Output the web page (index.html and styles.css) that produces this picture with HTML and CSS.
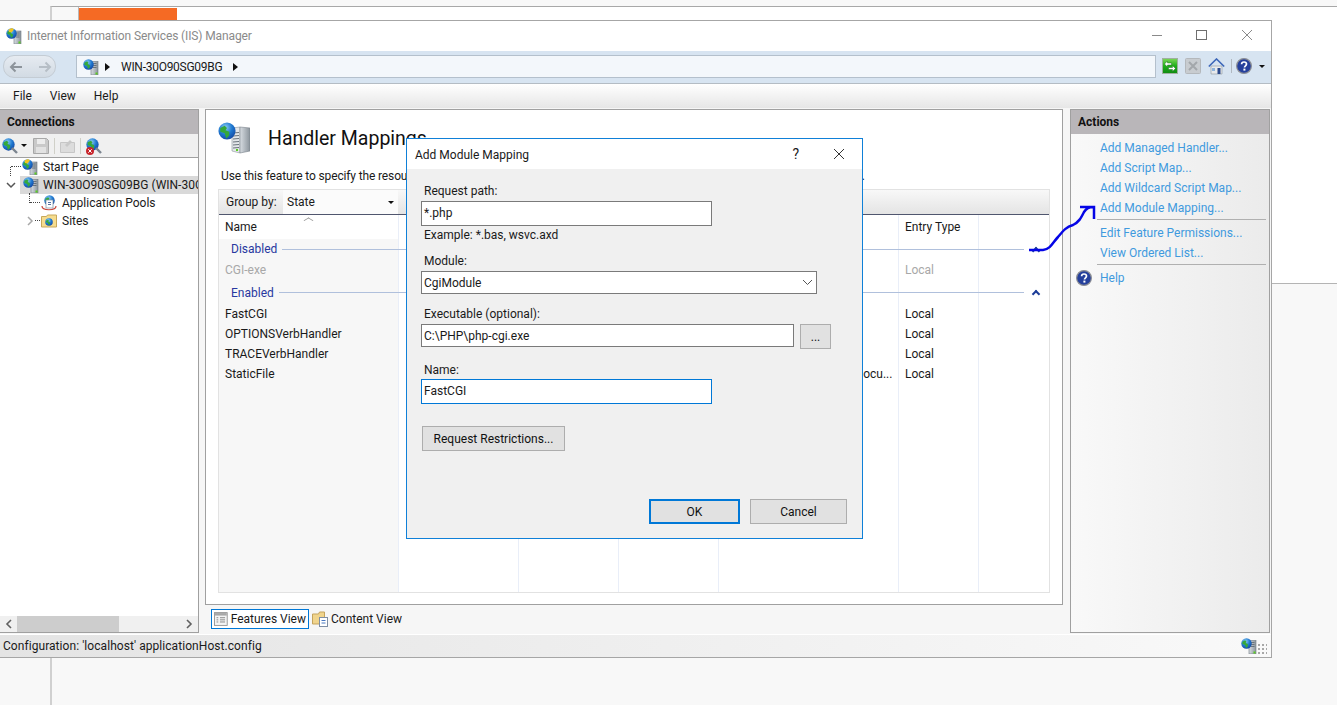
FILE: index.html
```html
<!DOCTYPE html>
<html lang="en">
<head>
    <meta charset="UTF-8">
    <meta name="viewport" content="width=device-width, initial-scale=1.0">
    <title>Internet Information Services (IIS) Manager</title>
    <link rel="stylesheet" href="styles.css">
</head>
<body>
    <svg class="defs" aria-hidden="true">
        <defs>
            <radialGradient id="sea" cx=".4" cy=".3" r=".8">
                <stop offset="0" stop-color="#8fd0f5"/>
                <stop offset=".5" stop-color="#1f78d0"/>
                <stop offset="1" stop-color="#123f9a"/>
            </radialGradient>
            <linearGradient id="case" x1="0" x2="1" y1="0" y2="0">
                <stop offset="0" stop-color="#d8dde2"/>
                <stop offset="1" stop-color="#8b949c"/>
            </linearGradient>
            <linearGradient id="greenbtn" x1="0" x2="0" y1="0" y2="1">
                <stop offset="0" stop-color="#7fd85a"/>
                <stop offset=".5" stop-color="#1fae1a"/>
                <stop offset="1" stop-color="#0f8a12"/>
            </linearGradient>
        </defs>
        <symbol id="globe" viewBox="0 0 12 12">
            <circle cx="6" cy="6" r="5.7" fill="url(#sea)"/>
            <path d="M1.500 4 4.500 2.500 6 4 5 5.500 7.500 6.500 7.500 9 5.500 11 4.500 7.500 1.500 6.500z" fill="#35a83a"/>
        </symbol>
        <symbol id="server" viewBox="0 0 16 16">
            <rect x="8" y="2.500" width="7" height="13.500" fill="url(#case)" stroke="#6f7880" stroke-width=".6"/>
            <path d="M9.500 4.500h4M9.500 6.500h4M9.500 8.500h4" stroke="#59626a" stroke-width=".8"/>
            <rect x="12.500" y="13.500" width="2" height="2" fill="#5ad01e"/>
            <use href="#globe" x="0" y="0" width="11" height="11"/>
        </symbol>
        <symbol id="server-big" viewBox="0 0 32 32">
            <path d="M14 6 22 5V31L14 29z" fill="#e4e7ea" stroke="#8b949c" stroke-width=".6"/>
            <path d="M22 5 32 6V29L22 31z" fill="url(#case)" stroke="#7a838b" stroke-width=".6"/>
            <path d="M15 11 21 10.500M15 14 21 13.500M15 17 21 16.500M15 20 21 19.500M15 23 21 22.500M15 26 21 25.500" stroke="#69727a"/>
            <rect x="18" y="27" width="2" height="2" fill="#5ad01e"/>
            <use href="#globe" x="0" y="0" width="18" height="18"/>
        </symbol>
        <symbol id="server-y" viewBox="0 0 16 16">
            <rect x="8" y="3" width="7" height="13" fill="url(#case)" stroke="#6f7880" stroke-width=".6"/>
            <path d="M9.500 5h4M9.500 7h4M9.500 9h4" stroke="#59626a" stroke-width=".8"/>
            <rect x="12.500" y="13.500" width="2" height="2" fill="#5ad01e"/>
            <use href="#globe" x="0" y="0" width="11" height="11"/>
            <path d="M2.500 1.500 6 0 8 1.500 5.500 4.500 3 4z" fill="#f2c420"/>
        </symbol>
        <symbol id="help" viewBox="0 0 16 16">
            <circle cx="8" cy="8" r="7.400" fill="#25409c" stroke="#8d8f95" stroke-width="1.200"/>
            <path d="M5.600 6.200C5.600 4.600 6.800 4 8 4s2.500.7 2.500 2.100c0 1.800-2 1.800-2 3.500" fill="none" stroke="#fff" stroke-width="1.700"/>
            <rect x="7.400" y="10.600" width="2" height="2" fill="#fff"/>
        </symbol>
        <symbol id="globe-lens" viewBox="0 0 16 16">
            <use href="#globe" x="0" y="0" width="13" height="13"/>
            <path d="M10 10l5 5" stroke="#7c8590" stroke-width="2.400"/>
        </symbol>
    </svg>

    <div class="back-bar"><div class="orange"></div></div>

    <div class="window">
        <div class="titlebar">
            <svg class="icon"><use href="#server-y"/></svg>
            <span class="title-text">Internet Information Services (IIS) Manager</span>
            <div class="win-btns">
                <svg width="12" height="12" viewBox="0 0 12 12"><path d="M1 6.500h10" stroke="#8a8a8a"/></svg>
                <svg width="12" height="12" viewBox="0 0 12 12"><rect x=".5" y="1.500" width="10" height="9" fill="none" stroke="#6f6f6f"/></svg>
                <svg width="12" height="12" viewBox="0 0 12 12"><path d="M1 1l10 10M11 1 1 11" stroke="#8a8a8a"/></svg>
            </div>
        </div>

        <div class="addressbar">
            <div class="nav-pill">
                <svg width="14" height="12" viewBox="0 0 14 12"><path d="M13 6H2M6.500 1.500 2 6l4.500 4.500" fill="none" stroke="#8d949b" stroke-width="2"/></svg>
                <svg width="14" height="12" viewBox="0 0 14 12"><path d="M1 6h11M7.500 1.500 12 6l-4.500 4.500" fill="none" stroke="#b6bec6" stroke-width="2"/></svg>
            </div>
            <div class="address">
                <svg class="icon"><use href="#server"/></svg>
                <span class="tri"></span>
                <span class="addr-text">WIN-30O90SG09BG</span>
                <span class="tri"></span>
            </div>
            <div class="addr-tools">
                <svg width="16" height="16" viewBox="0 0 16 16"><rect x=".5" y=".5" width="15" height="15" fill="url(#greenbtn)" stroke="#9fb0a0"/><path d="M2.500 6 5.500 3V5H9.500V7H5.500V9zM13.500 10.500l-3 3v-2H6.500v-2h4v-2z" fill="#fff" stroke="#0c5a10" stroke-width=".4"/></svg>
                <svg width="16" height="16" viewBox="0 0 16 16"><rect x=".5" y=".5" width="15" height="15" rx="1" fill="#c8ccd0" stroke="#b4b8bc"/><path d="M4 4l8 8M12 4l-8 8" stroke="#a3a7ab" stroke-width="2"/></svg>
                <svg width="17" height="17" viewBox="0 0 17 17"><path d="M3 8v8h11V8z" fill="#e8eaec" stroke="#8a939c" stroke-width=".6"/><path d="M.8 8.500 8.500 1l7.700 7.500" fill="none" stroke="#3c66b8" stroke-width="1.600"/><rect x="4" y="10" width="3" height="3" fill="#8fb4dc"/><rect x="9.500" y="10" width="3" height="6" fill="#2c4a8c"/></svg>
                <span class="tool-sep"></span>
                <svg width="16" height="16"><use href="#help"/></svg>
                <span class="caret"></span>
            </div>
        </div>

        <div class="menubar">
            <span>File</span>
            <span>View</span>
            <span>Help</span>
        </div>

        <div class="workspace">
            <section class="connections">
                <h2 class="panel-head">Connections</h2>
                <div class="conn-tools">
                    <svg width="16" height="16"><use href="#globe-lens"/></svg>
                    <span class="caret small"></span>
                    <svg width="16" height="16" viewBox="0 0 16 16"><path d="M.5.5h13l2 2v13H.5z" fill="#c9c9c9" stroke="#a8a8a8"/><rect x="4" y="1" width="8" height="5" fill="#ececec"/><rect x="3" y="9" width="10" height="6" fill="#e2e2e2"/></svg>
                    <span class="conn-sep"></span>
                    <svg width="15" height="14" viewBox="0 0 15 14"><path d="M.5 3.500h14v10H.5z" fill="#dcdcdc" stroke="#c6c6c6"/><path d="M5 6 10 1l2 2-5 5z" fill="#c8c8c8"/></svg>
                    <span class="conn-sep"></span>
                    <span class="globe-x">
                        <svg width="16" height="16"><use href="#globe-lens"/></svg>
                        <svg class="x-badge" width="8" height="8" viewBox="0 0 8 8"><circle cx="4" cy="4" r="4" fill="#c8262c"/><path d="M2.300 2.300l3.400 3.400M5.700 2.300 2.300 5.700" stroke="#fff"/></svg>
                    </span>
                </div>
                <div class="tree">
                    <div class="node"><span class="dots"></span><svg class="icon"><use href="#server-y"/></svg><span>Start Page</span></div>
                    <div class="node selected">
                        <svg class="chev" width="10" height="8" viewBox="0 0 10 8"><path d="M1 2l4 4 4-4" fill="none" stroke="#555" stroke-width="1.500"/></svg>
                        <svg class="icon"><use href="#server"/></svg><span>WIN-30O90SG09BG (WIN-30O90SG09BG\Administrator)</span>
                    </div>
                    <div class="node child"><span class="dots"></span>
                        <svg class="icon" viewBox="0 0 16 16"><use href="#globe" x="3" y="0" width="11" height="11"/><rect x="5" y="5" width="7" height="8" fill="#fff" stroke="#7d8ea0" stroke-width=".7"/><path d="M7 7.500h3M7 9.500h3" stroke="#5570a0"/><path d="M1 11c0 5 14 5 14 0" fill="none" stroke="#c8453a" stroke-width="1.200"/></svg>
                        <span>Application Pools</span>
                    </div>
                    <div class="node child">
                        <svg class="chev light" width="8" height="10" viewBox="0 0 8 10"><path d="M2 1l4 4-4 4" fill="none" stroke="#a8a8a8" stroke-width="1.500"/></svg>
                        <span class="dots short"></span>
                        <svg class="icon" viewBox="0 0 16 16"><path d="M.5 3.500h5l1-1.500h9v12H.5z" fill="#f5dc8e" stroke="#c8a85a"/><use href="#globe" x="4" y="5" width="8" height="8"/></svg>
                        <span>Sites</span>
                    </div>
                </div>
                <div class="hscroll">
                    <svg width="8" height="10" viewBox="0 0 8 10"><path d="M6 1 2 5l4 4" fill="none" stroke="#606060" stroke-width="1.600"/></svg>
                    <div class="thumb-track"><div class="thumb"></div></div>
                    <svg width="8" height="10" viewBox="0 0 8 10"><path d="M2 1l4 4-4 4" fill="none" stroke="#606060" stroke-width="1.600"/></svg>
                </div>
            </section>

            <div class="center">
                <section class="feature">
                    <div class="feature-head">
                        <svg class="icon-big"><use href="#server-big"/></svg>
                        <h1>Handler Mappings</h1>
                    </div>
                    <p class="feature-desc">Use this feature to specify the resources, such as DLLs and managed code, that handle responses for specific request types.</p>
                    <div class="list">
                        <div class="groupbar">
                            <span class="group-label">Group by:</span>
                            <div class="group-select"><span>State</span><span class="caret small"></span></div>
                        </div>
                        <div class="list-body">
                            <div class="row head">
                                <span class="c-name">Name</span>
                                <span class="sort"></span>
                                <span class="c-handler"></span>
                                <span class="c-type">Entry Type</span>
                            </div>
                            <div class="group first"><span>Disabled</span><i></i><b class="up"></b></div>
                            <div class="row off">
                                <span class="c-name">CGI-exe</span>
                                <span class="c-handler"></span>
                                <span class="c-type">Local</span>
                            </div>
                            <div class="group"><span>Enabled</span><i></i><b class="up"></b></div>
                            <div class="row">
                                <span class="c-name">FastCGI</span>
                                <span class="c-handler"></span>
                                <span class="c-type">Local</span>
                            </div>
                            <div class="row">
                                <span class="c-name">OPTIONSVerbHandler</span>
                                <span class="c-handler"></span>
                                <span class="c-type">Local</span>
                            </div>
                            <div class="row">
                                <span class="c-name">TRACEVerbHandler</span>
                                <span class="c-handler"></span>
                                <span class="c-type">Local</span>
                            </div>
                            <div class="row">
                                <span class="c-name">StaticFile</span>
                                <span class="c-handler">StaticFileModule,DefaultDocu...</span>
                                <span class="c-type">Local</span>
                            </div>
                        </div>
                    </div>
                </section>
                <div class="view-tabs">
                    <div class="view-tab active">
                        <svg width="16" height="16" viewBox="0 0 16 16"><rect x=".5" y=".5" width="15" height="15" fill="#f4f4f4" stroke="#8d8d8d"/><rect x="1" y="1" width="14" height="3" fill="#a8a8a8"/><path d="M3 6.500h2M3 9h2M3 11.500h2M7 6.500h6M7 9h6M7 11.500h6" stroke="#7a7a7a"/></svg>
                        <span>Features View</span>
                    </div>
                    <div class="view-tab">
                        <svg width="16" height="16" viewBox="0 0 16 16"><path d="M.5 3h6l1-2h5v12H.5z" fill="#f0d48c" stroke="#c4a35c"/><rect x="7.500" y="6.500" width="8" height="9" fill="#fff" stroke="#7e8ea4"/><path d="M9.500 9.500h4M9.500 12h4" stroke="#4a78c0"/></svg>
                        <span>Content View</span>
                    </div>
                </div>
            </div>

            <section class="actions">
                <h2 class="panel-head">Actions</h2>
                <div class="action-list">
                    <a>Add Managed Handler...</a>
                    <a>Add Script Map...</a>
                    <a>Add Wildcard Script Map...</a>
                    <a>Add Module Mapping...</a>
                    <hr>
                    <a>Edit Feature Permissions...</a>
                    <a>View Ordered List...</a>
                    <hr>
                    <a class="help-link"><svg width="16" height="16"><use href="#help"/></svg>Help</a>
                </div>
            </section>
        </div>

        <div class="statusbar">
            <span class="status-text">Configuration: 'localhost' applicationHost.config</span>
            <svg class="icon"><use href="#server"/></svg>
            <span class="grip"></span>
        </div>

        <div class="dialog">
            <div class="dlg-title">
                <span class="dlg-name">Add Module Mapping</span>
                <span class="dlg-q">?</span>
                <svg width="12" height="12" viewBox="0 0 12 12"><path d="M1 1l10 10M11 1 1 11" stroke="#333"/></svg>
            </div>
            <div class="dlg-body">
                <label class="lbl">Request path:</label>
                <div class="field f-short">*.php</div>
                <p class="hint">Example: *.bas, wsvc.axd</p>
                <label class="lbl l-module">Module:</label>
                <div class="field f-select">
                    <span>CgiModule</span>
                    <svg width="11" height="7" viewBox="0 0 11 7"><path d="M1 1l4.500 4.500L10 1" fill="none" stroke="#555"/></svg>
                </div>
                <label class="lbl l-exec">Executable (optional):</label>
                <div class="exec-row">
                    <div class="field f-exec">C:\PHP\php-cgi.exe</div>
                    <button class="btn btn-dots">...</button>
                </div>
                <label class="lbl l-name">Name:</label>
                <div class="field f-short focus">FastCGI</div>
                <button class="btn btn-restrict">Request Restrictions...</button>
                <div class="dlg-foot">
                    <button class="btn btn-ok">OK</button>
                    <button class="btn btn-cancel">Cancel</button>
                </div>
            </div>
        </div>
    </div>

    <!-- hand drawn arrow on top of the screenshot -->
    <svg class="scribble" width="80" height="60" viewBox="0 0 80 60">
        <path d="M0 46H14C22 45 24 38 29 33C34 27 37 23 44 21C50 18 52 14 55 8C57 5 60 3 64 3M51 3H65V15" fill="none" stroke="#0505e6" stroke-width="2.500"/>
    </svg>
</body>
</html>
```

FILE: styles.css
```css
* {
    margin: 0;
    padding: 0;
    box-sizing: border-box;
}
body {
    position: relative;
    height: 705px;
    overflow: hidden;
    background: #f8f8f8;
    font-family: Roboto, "Noto Sans", Arial, sans-serif;
    font-size: 12px;
    color: #1a1a1a;
}
.defs {
    position: absolute;
    width: 0;
    height: 0;
}
.icon {
    width: 16px;
    height: 16px;
    flex: none;
}

/* stuff behind the window */
.back-bar {
    position: absolute;
    left: 50px;
    top: 6px;
    right: 0;
    height: 278px;
    border-top: 1px solid #a8a8a8;
    border-left: 2px solid #d0d0d0;
    border-bottom: 1px solid #b4b4b4;
    background: linear-gradient(90deg, #f8f8f8 26px, #b8b8b8 26px, #b8b8b8 27px, #fff 27px);
}
.back-bar::after {
    content: "";
    position: absolute;
    left: -2px;
    top: 277px;
    height: 423px;
    border-left: 2px solid #d0d0d0;
}
.orange {
    position: absolute;
    left: 27px;
    top: 1px;
    width: 98px;
    height: 13px;
    background: #f56a24;
}

.window {
    position: absolute;
    left: 0;
    top: 20px;
    width: 1272px;
    height: 638px;
    display: flex;
    flex-direction: column;
    background: #f6f6f6;
    border: 1px solid #a6a6a6;
    border-left: 0;
}
.titlebar {
    height: 30px;
    flex: none;
    display: flex;
    align-items: center;
    padding-left: 6px;
    background: #fff;
}
.title-text {
    margin-left: 5px;
    color: #8a8a8a;
    letter-spacing: -.12px;
}
.win-btns {
    margin-left: auto;
    display: flex;
    gap: 33px;
    padding-right: 18px;
    margin-top: -2px;
}
.addressbar {
    height: 33px;
    flex: none;
    display: flex;
    align-items: center;
    background: #d7e4f1;
    border-bottom: 1px solid #b4bcc4;
}
.nav-pill {
    width: 53px;
    height: 23px;
    margin-left: 3px;
    margin-top: -1px;
    display: flex;
    align-items: center;
    justify-content: space-between;
    padding: 0 3px 0 5px;
    background: linear-gradient(#e6ebf1, #d2dbe4);
    border: 1px solid #c4ccd4;
    border-radius: 11px;
}
.address {
    width: 1080px;
    height: 23px;
    margin-left: 20px;
    margin-top: -1px;
    display: flex;
    align-items: center;
    padding-left: 6px;
    background: #f3f7fb;
    border: 1px solid #b4c0cc;
}
.tri {
    width: 0;
    height: 0;
    margin: 0 11px 0 6px;
    border-left: 5px solid #111;
    border-top: 4px solid transparent;
    border-bottom: 4px solid transparent;
}
.addr-text {
    letter-spacing: -.27px;
}
.addr-text + .tri {
    margin-left: 11px;
}
.addr-tools {
    display: flex;
    align-items: center;
    margin-left: 6px;
    margin-top: -2px;
    gap: 7px;
}
.tool-sep {
    width: 1px;
    height: 14px;
    margin-left: -1px;
    background: #b0b8c0;
}
.tool-sep + svg {
    margin-left: -3px;
}
.caret {
    width: 0;
    height: 0;
    border-top: 3px solid #111;
    border-left: 3px solid transparent;
    border-right: 3px solid transparent;
}
.menubar {
    height: 24px;
    flex: none;
    display: flex;
    align-items: center;
    gap: 18px;
    padding-left: 13px;
    background: linear-gradient(#ffffff, #e6e6e6);
}
.workspace {
    flex: 1;
    display: flex;
    min-height: 0;
    padding-top: 1px;
}
.panel-head {
    height: 24px;
    line-height: 24px;
    padding-left: 7px;
    font-size: 12px;
    font-weight: 700;
    background: #b9b6b9;
    color: #111;
}
.connections {
    width: 199px;
    height: 524px;
    flex: none;
    display: flex;
    flex-direction: column;
    background: #fff;
    border: 1px solid #a0a0a0;
    border-left: 0;
}
.conn-tools {
    height: 24px;
    flex: none;
    display: flex;
    align-items: center;
    gap: 3px;
    padding-left: 2px;
    background: #f0f0f0;
    border-bottom: 1px solid #a0a0a0;
}
.conn-tools .caret {
    margin-right: 3px;
}
.conn-sep {
    width: 1px;
    height: 16px;
    margin: 0 2px;
    background: #d0d0c8;
}
.globe-x {
    position: relative;
    height: 16px;
}
.x-badge {
    position: absolute;
    left: 0;
    bottom: -1px;
}
.tree {
    flex: 1;
    overflow: hidden;
}
.node {
    height: 18px;
    display: flex;
    align-items: center;
    gap: 5px;
    padding-left: 22px;
    white-space: nowrap;
    position: relative;
}
.node.selected {
    margin-left: 20px;
    padding-left: 3px;
    gap: 4px;
    background: #d9d9d9;
}
.node.child {
    padding-left: 41px;
}
.dots {
    position: absolute;
    left: 11px;
    top: 8px;
    width: 10px;
    border-top: 1px dotted #444;
}
.dots::before {
    content: "";
    position: absolute;
    left: -1px;
    top: 0;
    height: 9px;
    border-left: 1px dotted #444;
}
.child .dots {
    left: 30px;
}
.child .dots::before {
    top: -10px;
    height: 10px;
}
.child .dots.short {
    left: 35px;
    width: 5px;
}
.child .dots.short::before {
    display: none;
}
.chev {
    position: absolute;
    left: -14px;
    top: 5px;
}
.chev.light {
    left: 26px;
    top: 4px;
}
.hscroll {
    height: 16px;
    flex: none;
    display: flex;
    align-items: center;
    padding: 0 5px;
    gap: 4px;
    background: #f0f0f0;
}
.thumb-track {
    flex: 1;
    height: 16px;
}
.thumb {
    width: 102px;
    height: 16px;
    background: #cdcdcd;
}

.center {
    width: 858px;
    flex: none;
    margin-left: 6px;
    display: flex;
    flex-direction: column;
}
.feature {
    height: 496px;
    flex: none;
    display: flex;
    flex-direction: column;
    padding: 12px 12px 11px 12px;
    background: #fff;
    border: 1px solid #a0a0a0;
}
.feature-head {
    display: flex;
    align-items: center;
    height: 32px;
}
.icon-big {
    width: 32px;
    height: 32px;
}
.feature-head h1 {
    margin-left: 18px;
    font-size: 19.5px;
    font-weight: 400;
    color: #111;
}
.feature-desc {
    margin: 15px 0 0 3px;
    height: 20px;
    white-space: nowrap;
    letter-spacing: -.14px;
}
.list {
    flex: 1;
    display: flex;
    flex-direction: column;
    border: 1px solid #e2e2e2;
}
.groupbar {
    height: 25px;
    flex: none;
    display: flex;
    align-items: center;
    background: linear-gradient(#f8f8f8, #e4e4e4);
    border-bottom: 1px solid #50566e;
}
.group-label {
    width: 64px;
    padding-left: 7px;
}
.group-select {
    width: 115px;
    height: 24px;
    display: flex;
    align-items: center;
    justify-content: space-between;
    padding: 0 4px;
    background: #fbfbfb;
}
.list-body {
    flex: 1;
    background:
        linear-gradient(#e9eef8, #e9eef8) 179px 0/1px 100% no-repeat,
        linear-gradient(#e9eef8, #e9eef8) 299px 0/1px 100% no-repeat,
        linear-gradient(#e9eef8, #e9eef8) 399px 0/1px 100% no-repeat,
        linear-gradient(#e9eef8, #e9eef8) 499px 0/1px 100% no-repeat,
        linear-gradient(#e9eef8, #e9eef8) 679px 0/1px 100% no-repeat,
        linear-gradient(#e9eef8, #e9eef8) 759px 0/1px 100% no-repeat,
        linear-gradient(#f7f7f7, #f7f7f7) 0 24px/179px 100% no-repeat;
}
.row {
    height: 20px;
    display: flex;
    align-items: center;
    white-space: nowrap;
    position: relative;
}
.row.head {
    height: 24px;
}
.row.off {
    color: #a8a8a8;
}
.c-name {
    width: 506px;
    padding-left: 6px;
}
.c-handler {
    width: 180px;
    text-align: right;
    padding-right: 14px;
}
.sort {
    position: absolute;
    left: 86px;
    top: 2px;
    width: 7px;
    height: 7px;
    border-top: 1px solid #999;
    border-left: 1px solid #999;
    transform: scaleY(.6) rotate(45deg);
}
.group {
    height: 24px;
    display: flex;
    align-items: center;
    padding: 1px 10px 0 12px;
    color: #2838a0;
}
.group.first {
    height: 21px;
    padding-top: 0;
    padding-bottom: 1px;
}
.group i {
    flex: 1;
    height: 1px;
    margin-left: 5px;
    background: #b0c0dc;
}
.up {
    width: 6px;
    height: 6px;
    margin: 3px 0 0 9px;
    border-top: 2px solid #1c3c98;
    border-left: 2px solid #1c3c98;
    transform: rotate(45deg);
}

.view-tabs {
    display: flex;
    align-items: center;
    padding: 4px 0 0 6px;
    gap: 1px;
}
.view-tab {
    height: 20px;
    display: flex;
    align-items: center;
    gap: 3px;
    white-space: nowrap;
    padding: 0 2px;
}
.view-tab.active {
    width: 98px;
    background: #fff;
    border: 1px solid #0078d7;
}

.actions {
    width: 200px;
    height: 524px;
    flex: none;
    margin-left: 7px;
    display: flex;
    flex-direction: column;
    border: 1px solid #a0a0a0;
    background: linear-gradient(90deg, #f9f9f9, #ebebeb);
}
.action-list {
    padding: 4px 3px 0 29px;
}
.action-list a {
    display: block;
    height: 20px;
    line-height: 20px;
    color: #3f9ade;
    white-space: nowrap;
}
.action-list hr {
    border: 0;
    height: 1px;
    margin: 1px 0 3px -3px;
    background: #b0b0b0;
}
.help-link {
    position: relative;
}
.help-link svg {
    position: absolute;
    left: -24px;
    top: 2px;
}
.statusbar {
    height: 23px;
    flex: none;
    display: flex;
    align-items: center;
    padding: 0 3px;
    background: linear-gradient(90deg, #e4e4e4, #f9f9f9);
    border-top: 1px solid #fff;
}
.status-text {
    letter-spacing: .06px;
}
.statusbar .icon {
    margin-left: auto;
}
.grip {
    width: 10px;
    height: 12px;
    margin: 6px 1px 0 0;
    background: radial-gradient(circle, #a8a8a8 1px, transparent 1.200px) 0 0/4px 4px;
}

/* modal */
.dialog {
    position: absolute;
    left: 406px;
    top: 117px;
    width: 457px;
    height: 401px;
    display: flex;
    flex-direction: column;
    background: #f0f0f0;
    border: 1px solid #0f80d8;
}
.dlg-title {
    height: 30px;
    flex: none;
    display: flex;
    align-items: center;
    padding: 0 17px 0 8px;
    background: #fff;
}
.dlg-name {
    flex: 1;
    padding-top: 1px;
}
.dlg-q {
    margin-right: 34px;
    font-size: 14px;
}
.dlg-body {
    flex: 1;
    display: flex;
    flex-direction: column;
    align-items: flex-start;
    padding: 13px 15px 14px 14px;
}
.lbl {
    display: block;
    height: 16px;
    line-height: 18px;
    padding-left: 3px;
    margin-bottom: 3px;
}
.hint {
    height: 16px;
    line-height: 16px;
    margin-top: 1px;
    padding-left: 3px;
}
.l-module {
    margin-top: 9px;
}
.l-exec {
    margin-top: 11px;
}
.l-name {
    margin-top: 12px;
    margin-bottom: 2px;
}
.field {
    height: 25px;
    display: flex;
    align-items: center;
    padding-left: 2px;
    background: #fff;
    border: 1px solid #7a7a7a;
}
.f-short {
    width: 291px;
    padding-bottom: 2px;
}
.f-select {
    width: 396px;
    height: 23px;
    justify-content: space-between;
    padding-right: 3px;
}
.exec-row {
    display: flex;
    gap: 6px;
    align-items: flex-start;
}
.f-exec {
    width: 373px;
    height: 23px;
}
.focus {
    border-color: #0078d7;
}
.btn {
    height: 25px;
    font-family: inherit;
    font-size: 12px;
    color: #111;
    background: #e1e1e1;
    border: 1px solid #adadad;
}
.btn-dots {
    width: 31px;
}
.btn-restrict {
    width: 143px;
    margin: 22px 0 0 1px;
}
.dlg-foot {
    margin-top: auto;
    align-self: flex-end;
    display: flex;
    gap: 10px;
}
.btn-ok {
    width: 91px;
    border: 2px solid #0078d7;
}
.btn-cancel {
    width: 97px;
}
.scribble {
    position: absolute;
    left: 1029px;
    top: 204px;
}
```
